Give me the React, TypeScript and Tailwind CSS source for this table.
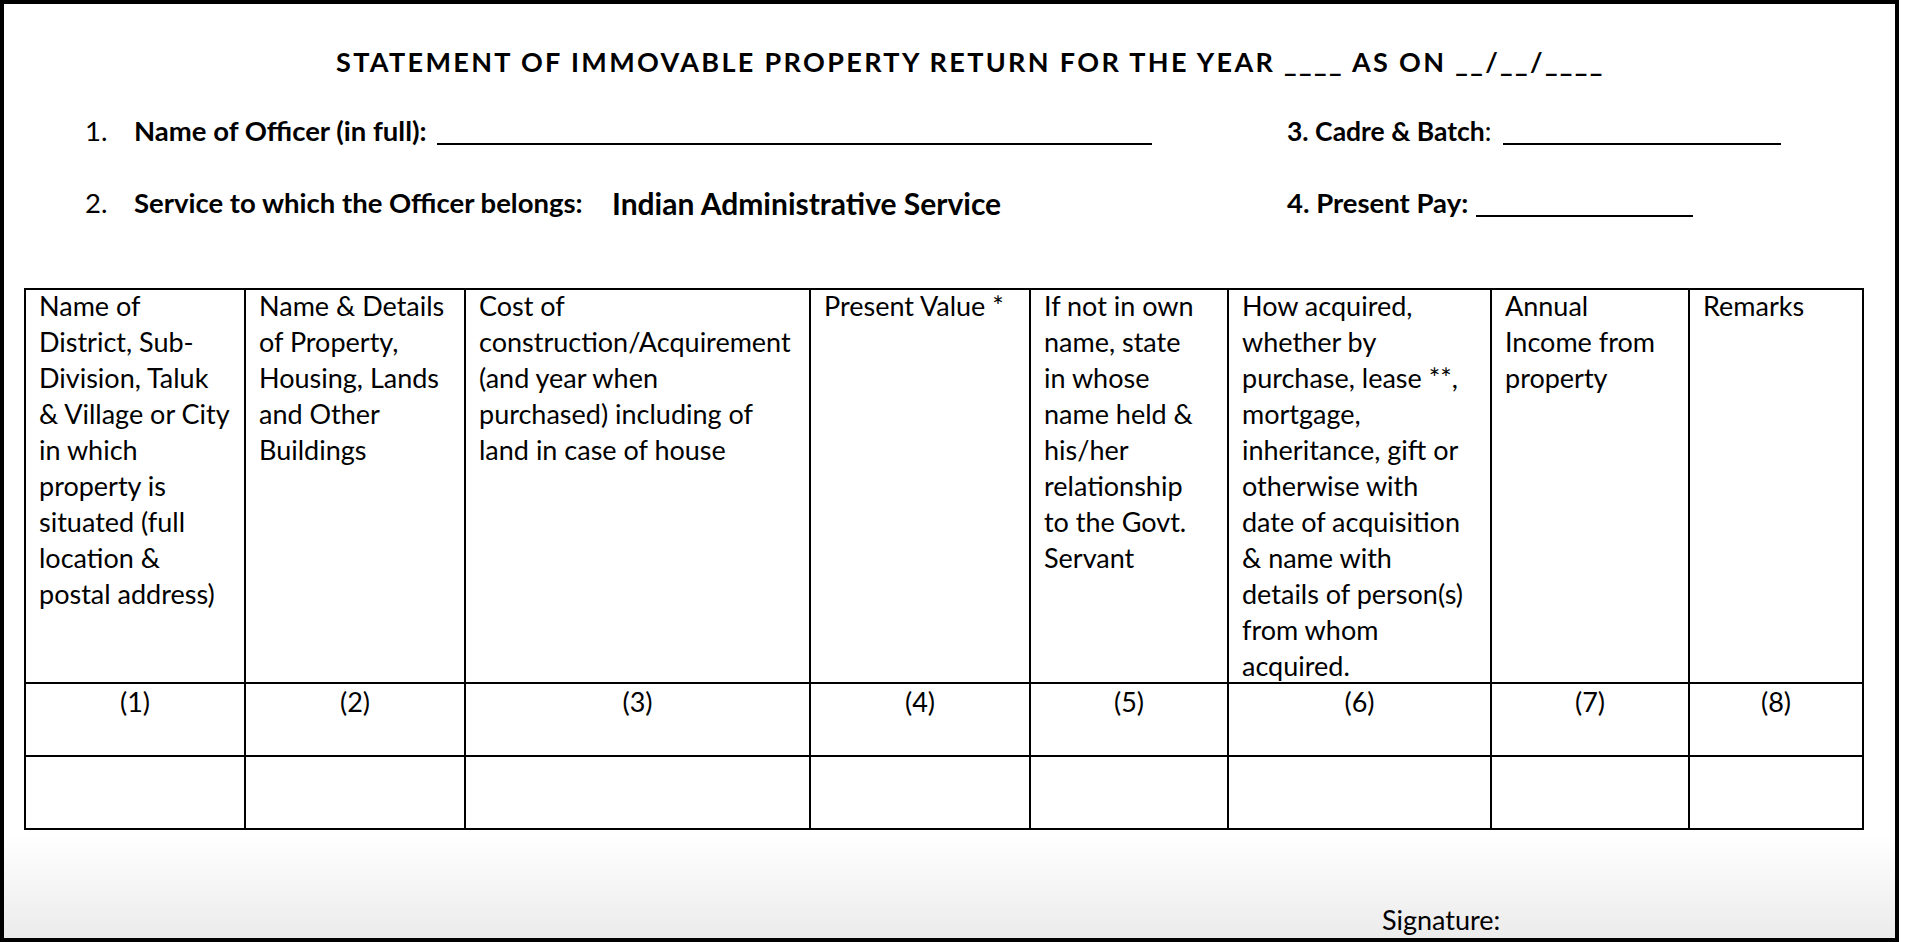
const headers: string[][] = [
  ['Name of', 'District, Sub-', 'Division, Taluk', '& Village or City', 'in which', 'property is', 'situated (full', 'location &', 'postal address)'],
  ['Name & Details', 'of Property,', 'Housing, Lands', 'and Other', 'Buildings'],
  ['Cost of', 'construction/Acquirement', '(and year when', 'purchased) including of', 'land in case of house'],
  ['Present Value *'],
  ['If not in own', 'name, state', 'in whose', 'name held &', 'his/her', 'relationship', 'to the Govt.', 'Servant'],
  ['How acquired,', 'whether by', 'purchase, lease **,', 'mortgage,', 'inheritance, gift or', 'otherwise with', 'date of acquisition', '& name with', 'details of person(s)', 'from whom', 'acquired.'],
  ['Annual', 'Income from', 'property'],
  ['Remarks'],
]

function HeaderCell({ lines }: { lines: string[] }) {
  return (
    <div className="h-[394px] border-r-2 border-b-2 border-black pl-[13px] whitespace-nowrap">
      <div className="-mt-[2px]">
        {lines.map((line, i) => (
          <div key={i}>{line}</div>
        ))}
      </div>
    </div>
  )
}

export default function App() {
  return (
    <div className="w-[1914px] h-[942px] bg-white font-['Lato',sans-serif] text-black">
      <div className="w-[1899px] h-[942px] border-4 border-black flex flex-col bg-[linear-gradient(to_bottom,#ffffff_89%,#ebebeb)]">
        {/* Title */}
        <div className="mt-[40px] pl-[332px] text-[27px] leading-[36px] font-bold tracking-[0.087em] whitespace-nowrap">
          STATEMENT OF IMMOVABLE PROPERTY RETURN FOR THE YEAR ____ AS ON __/__/____
        </div>

        {/* Officer details */}
        <div className="mt-[33px] pl-[81px] flex text-[27.5px] leading-[36px] whitespace-nowrap">
          <div className="w-[1202px] flex items-end">
            <span className="w-[49px]">1.</span>
            <span className="w-[303px] font-bold">Name of Officer (in full):</span>
            <span className="mb-[4px] w-[715px] border-b-2 border-black" />
          </div>
          <div className="flex items-end">
            <span className="w-[216px] text-[26.5px]">
              <span className="font-bold">3. Cadre &amp; Batch</span>:
            </span>
            <span className="mb-[4px] w-[278px] border-b-2 border-black" />
          </div>
        </div>

        <div className="mt-[36px] pl-[81px] flex text-[27.5px] leading-[36px] whitespace-nowrap">
          <div className="w-[1202px] flex items-end">
            <span className="w-[49px]">2.</span>
            <span className="w-[478px] font-bold">Service to which the Officer belongs:</span>
            <span className="font-bold text-[30px]">Indian Administrative Service</span>
          </div>
          <div className="flex items-end">
            <span className="w-[189px] font-bold">4. Present Pay:</span>
            <span className="mb-[4px] w-[217px] border-b-2 border-black" />
          </div>
        </div>

        {/* Property table */}
        <div className="mt-[67px] ml-[20px] w-[1840px] border-t-2 border-l-2 border-black grid grid-cols-[220px_220px_345px_220px_198px_263px_198px_174px] text-[27px] leading-[36px]">
          {headers.map((lines, i) => (
            <HeaderCell key={i} lines={lines} />
          ))}
          {headers.map((_, i) => (
            <div key={i} className="h-[73px] border-r-2 border-b-2 border-black text-center">
              ({i + 1})
            </div>
          ))}
          {headers.map((_, i) => (
            <div key={i} className="h-[73px] border-r-2 border-b-2 border-black" />
          ))}
        </div>

        {/* Signature */}
        <div className="mt-auto pl-[1378px] text-[27px] leading-[36px]">Signature:</div>
      </div>
    </div>
  )
}
